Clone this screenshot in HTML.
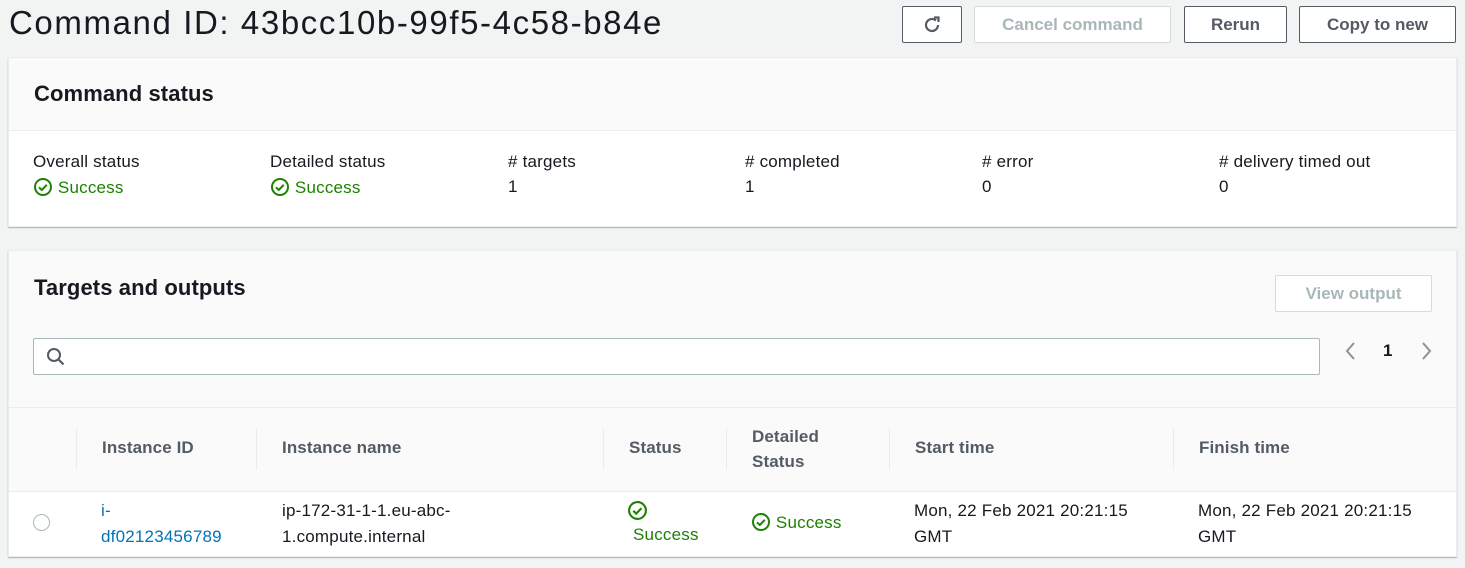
<!DOCTYPE html><html><head><style>
*{box-sizing:border-box;margin:0;padding:0}
body{width:1465px;height:568px;background:#f2f3f3;font-family:"Liberation Sans",sans-serif;color:#16191f;position:relative;overflow:hidden;font-size:16px}
.a{position:absolute}
.btn{position:absolute;top:6px;height:37px;border:1px solid #545b64;border-radius:2px;background:#fff;font-weight:bold;font-size:17px;color:#545b64;display:flex;align-items:center;justify-content:center}
.dis{border-color:#d5dbdb;color:#aab7b8}
.g{color:#1d8102}
.lbl{font-size:17px;letter-spacing:.2px}
.th{font-weight:bold;color:#545b64;font-size:17px;letter-spacing:.1px}
.sep{position:absolute;width:1px;background:#eaeded;top:428px;height:42px}
</style></head><body>
<div class="a" style="left:9px;top:4px;font-size:33px;letter-spacing:1.6px">Command ID: 43bcc10b-99f5-4c58-b84e</div>
<div class="btn" style="left:902px;width:60px"><svg width="22" height="22" viewBox="0 0 22 22"><path d="M17 11a6 6 0 1 1-2-4.5" fill="none" stroke="#545b64" stroke-width="2.2"/><path d="M13 3.5h4.5V8" fill="none" stroke="#545b64" stroke-width="2.2"/></svg></div>
<div class="btn dis" style="left:974px;width:197px">Cancel command</div>
<div class="btn" style="left:1184px;width:103px">Rerun</div>
<div class="btn" style="left:1299px;width:157px">Copy to new</div>

<div class="a" style="left:8px;top:57px;width:1449px;height:170px;background:#fff;box-shadow:0 1px 1px rgba(0,28,36,.3);border:1px solid #eaeded">
<div style="height:73px;background:#fafafa;border-bottom:1px solid #eaeded"></div></div>
<div class="a" style="left:34px;top:81px;font-weight:bold;font-size:22px;letter-spacing:.1px">Command status</div>
<svg width="0" height="0" style="position:absolute"><symbol id="ck" viewBox="0 0 20 20"><circle cx="10" cy="10" r="8" fill="none" stroke="#1d8102" stroke-width="2"/><path d="M6 10.3l2.8 2.7 5-5.2" fill="none" stroke="#1d8102" stroke-width="2"/></symbol></svg>
<div class="a lbl" style="left:33px;top:152px">Overall status</div>
<div class="a lbl g" style="left:33px;top:177px"><svg width="20" height="20" style="vertical-align:-4px"><use href="#ck"/></svg> Success</div>
<div class="a lbl" style="left:270px;top:152px">Detailed status</div>
<div class="a lbl g" style="left:270px;top:177px"><svg width="20" height="20" style="vertical-align:-4px"><use href="#ck"/></svg> Success</div>
<div class="a lbl" style="left:508px;top:152px"># targets</div><div class="a lbl" style="left:508px;top:177px">1</div>
<div class="a lbl" style="left:745px;top:152px"># completed</div><div class="a lbl" style="left:745px;top:177px">1</div>
<div class="a lbl" style="left:982px;top:152px"># error</div><div class="a lbl" style="left:982px;top:177px">0</div>
<div class="a lbl" style="left:1219px;top:152px"># delivery timed out</div><div class="a lbl" style="left:1219px;top:177px">0</div>

<div class="a" style="left:8px;top:250px;width:1449px;height:307px;background:#fff;box-shadow:0 1px 1px rgba(0,28,36,.3);border:1px solid #eaeded">
<div style="height:157px;background:#fafafa;border-bottom:1px solid #eaeded"></div>
<div style="height:84px;background:#fafafa;border-bottom:1px solid #eaeded"></div></div>
<div class="a" style="left:34px;top:275px;font-weight:bold;font-size:22px;letter-spacing:.1px">Targets and outputs</div>
<div class="a" style="left:1275px;top:275px;width:157px;height:37px;border:1px solid #d5dbdb;border-radius:2px;background:#fff;color:#aab7b8;font-weight:bold;font-size:17px;display:flex;align-items:center;justify-content:center">View output</div>
<div class="a" style="left:33px;top:338px;width:1287px;height:37px;border:1px solid #aab7b8;border-radius:2px;background:#fff"></div>
<svg class="a" style="left:45px;top:346px" width="22" height="22" viewBox="0 0 22 22"><circle cx="9" cy="9" r="6" fill="none" stroke="#545b64" stroke-width="2"/><path d="M13.5 13.5l5 5" stroke="#545b64" stroke-width="2.2"/></svg>
<svg class="a" style="left:1343px;top:341px" width="16" height="20"><path d="M11 2L4 10l7 8" fill="none" stroke="#879596" stroke-width="2"/></svg>
<div class="a" style="left:1383px;top:341px;font-weight:bold;font-size:17px">1</div>
<svg class="a" style="left:1418px;top:341px" width="16" height="20"><path d="M5 2l7 8-7 8" fill="none" stroke="#879596" stroke-width="2"/></svg>

<div class="sep" style="left:76px"></div><div class="sep" style="left:256px"></div><div class="sep" style="left:603px"></div><div class="sep" style="left:726px"></div><div class="sep" style="left:889px"></div><div class="sep" style="left:1173px"></div>
<div class="a th" style="left:102px;top:438px">Instance ID</div>
<div class="a th" style="left:282px;top:438px">Instance name</div>
<div class="a th" style="left:629px;top:438px">Status</div>
<div class="a th" style="left:752px;top:424px;line-height:25px">Detailed<br>Status</div>
<div class="a th" style="left:915px;top:438px">Start time</div>
<div class="a th" style="left:1199px;top:438px">Finish time</div>

<div class="a" style="left:33px;top:514px;width:17px;height:17px;border:1.5px solid #aab7b8;border-radius:50%"></div>
<div class="a lbl" style="left:101px;top:498px;line-height:26px;color:#0073bb">i-<br>df02123456789</div>
<div class="a lbl" style="left:282px;top:498px;line-height:26px;color:#16191f">ip-172-31-1-1.eu-abc-<br>1.compute.internal</div>
<svg class="a" style="left:627px;top:500px" width="21" height="21"><use href="#ck"/></svg>
<div class="a lbl g" style="left:633px;top:525px">Success</div>
<div class="a lbl g" style="left:751px;top:512px"><svg width="20" height="20" style="vertical-align:-4px"><use href="#ck"/></svg> Success</div>
<div class="a lbl" style="left:914px;top:498px;line-height:26px">Mon, 22 Feb 2021 20:21:15<br>GMT</div>
<div class="a lbl" style="left:1198px;top:498px;line-height:26px">Mon, 22 Feb 2021 20:21:15<br>GMT</div>
</body></html>
